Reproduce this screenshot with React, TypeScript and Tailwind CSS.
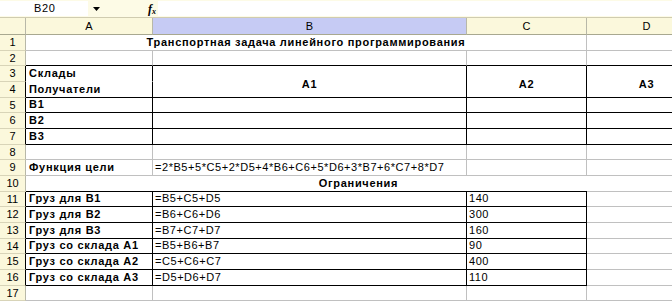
import React from 'react';

type Bd = 'g' | 'k' | 'n';

interface Cell {
  t?: string;
  cs?: number;
  rs?: number;
  r?: Bd;
  b?: Bd;
  bold?: boolean;
  center?: boolean;
}

const RIGHT: Record<Bd, string> = {
  g: 'border-r border-r-[#c0c0c0]',
  k: 'border-r border-r-black',
  n: 'border-r border-r-white',
};

const BOTTOM: Record<Bd, string> = {
  g: 'border-b border-b-[#c0c0c0]',
  k: 'border-b border-b-black',
  n: 'border-b border-b-white',
};

const SPAN: Record<number, string> = { 1: '', 2: 'col-span-2', 3: 'col-span-3', 4: 'col-span-4' };
const RSPAN: Record<number, string> = { 1: '', 2: 'row-span-2' };

const plain = (): Cell => ({});
const boxed = (t?: string, bold = false): Cell => ({ t, bold, r: 'k', b: 'k' });

const rows: Cell[][] = [
  [{ t: 'Транспортная задача линейного программирования', cs: 3, bold: true, center: true }, plain()],
  [{ b: 'k' }, { b: 'k' }, { b: 'k' }, { b: 'k' }],
  [
    { t: 'Склады', bold: true, r: 'k', b: 'n' },
    { t: 'А1', rs: 2, r: 'k', b: 'k', bold: true, center: true },
    { t: 'А2', rs: 2, r: 'k', b: 'k', bold: true, center: true },
    { t: 'А3', rs: 2, b: 'k', bold: true, center: true },
  ],
  [{ t: 'Получатели', bold: true, r: 'k', b: 'k' }],
  [boxed('В1', true), boxed(), boxed(), { b: 'k' }],
  [boxed('В2', true), boxed(), boxed(), { b: 'k' }],
  [boxed('В3', true), boxed(), boxed(), { b: 'k' }],
  [plain(), plain(), plain(), plain()],
  [
    { t: 'Функция цели', bold: true },
    { t: '=2*B5+5*C5+2*D5+4*B6+C6+5*D6+3*B7+6*C7+8*D7' },
    plain(),
    plain(),
  ],
  [],
  [boxed('Груз для В1', true), boxed('=B5+C5+D5'), boxed('140'), plain()],
  [boxed('Груз для В2', true), boxed('=B6+C6+D6'), boxed('300'), plain()],
  [boxed('Груз для В3', true), boxed('=B7+C7+D7'), boxed('160'), plain()],
  [boxed('Груз со склада А1', true), boxed('=B5+B6+B7'), boxed('90'), plain()],
  [boxed('Груз со склада А2', true), boxed('=C5+C6+C7'), boxed('400'), plain()],
  [boxed('Груз со склада А3', true), boxed('=D5+D6+D7'), boxed('110'), plain()],
  [plain(), plain(), plain(), plain()],
];

const darkHeader = [3, 4, 5, 6, 7, 11, 12, 13, 14, 15, 16];

const RowHead: React.FC<{ n: number }> = ({ n }) => (
  <div
    className={`flex items-center justify-center bg-[#fbf8dc] border-b border-b-[#d8d4b8] ${
      darkHeader.includes(n) ? 'border-r border-r-black' : 'border-r border-r-[#b8b8a8]'
    }`}
  >
    {n}
  </div>
);

const App: React.FC = () => {
  return (
    <div className="w-[672px] h-[301px] overflow-hidden bg-white text-black text-[11px] font-['Liberation_Sans',Arial,sans-serif]">
      {/* formula bar */}
      <div className="flex items-center h-[18px] bg-[#fdfbe6] border-b border-b-[#d0ccb0]">
        <div className="w-[88px] h-[15px] bg-white flex items-center pl-[34px] tracking-[0.6px]">B20</div>
        <div className="w-[16px] flex justify-center">
          <svg width="7" height="4" viewBox="0 0 7 4">
            <path d="M0 0h7L3.5 4z" fill="#000" />
          </svg>
        </div>
        <div className="w-[54px] flex justify-end items-end pr-[2px] italic font-bold leading-[12px] font-['Liberation_Serif',serif]">
          <span className="text-[12px]">f</span>
          <span className="text-[8px] leading-[8px] translate-y-[1px]">x</span>
        </div>
        <div className="flex-1 h-[15px] bg-white" />
      </div>

      <div className="grid grid-cols-[26px_127px_314px_120px_120px] grid-rows-[17px_16px_15px_16px_16px_15px_16px_16px_15px_16px_16px_15px_16px_16px_15px_16px_16px_15px]">
        {/* column headers */}
        <div className="bg-[#fbf8dc] border-r border-r-[#b8b8a8] border-b border-b-[#a8a890]" />
        {['A', 'B', 'C', 'D'].map(c => (
          <div
            key={c}
            className={`flex items-center justify-center border-r border-r-[#b8b8a8] border-b border-b-[#a8a890] ${
              c === 'B' ? 'bg-[#c6cbf4]' : 'bg-[#fbf8dc]'
            }`}
          >
            {c}
          </div>
        ))}

        {rows.map((cells, i) => {
          const n = i + 1;
          if (n === 10) {
            return (
              <React.Fragment key={n}>
                <RowHead n={n} />
                <div className="col-span-4 flex flex-col">
                  <div className="flex-1 flex items-end justify-center pr-4 pb-[1px] leading-[13px] font-bold tracking-[0.7px]">
                    Ограничения
                  </div>
                  <div className="flex h-px">
                    <div className="w-[561px] bg-black" />
                    <div className="flex-1 bg-[#c0c0c0]" />
                  </div>
                </div>
              </React.Fragment>
            );
          }
          return (
            <React.Fragment key={n}>
              <RowHead n={n} />
              {cells.map((c, j) => (
                <div
                  key={j}
                  className={`flex whitespace-nowrap overflow-visible leading-[13px] ${RIGHT[c.r ?? 'g']} ${
                    BOTTOM[c.b ?? 'g']
                  } ${SPAN[c.cs ?? 1]} ${RSPAN[c.rs ?? 1]} ${
                    c.center ? 'justify-center' : j === 0 ? 'pl-[3px]' : 'pl-[2px]'
                  } ${c.rs ? 'items-center pt-[5px]' : 'items-end pb-[1px]'} ${
                    c.bold ? 'font-bold tracking-[0.7px]' : 'tracking-[0.55px]'
                  }`}
                >
                  {c.t}
                </div>
              ))}
            </React.Fragment>
          );
        })}
      </div>
    </div>
  );
};

export default App;
